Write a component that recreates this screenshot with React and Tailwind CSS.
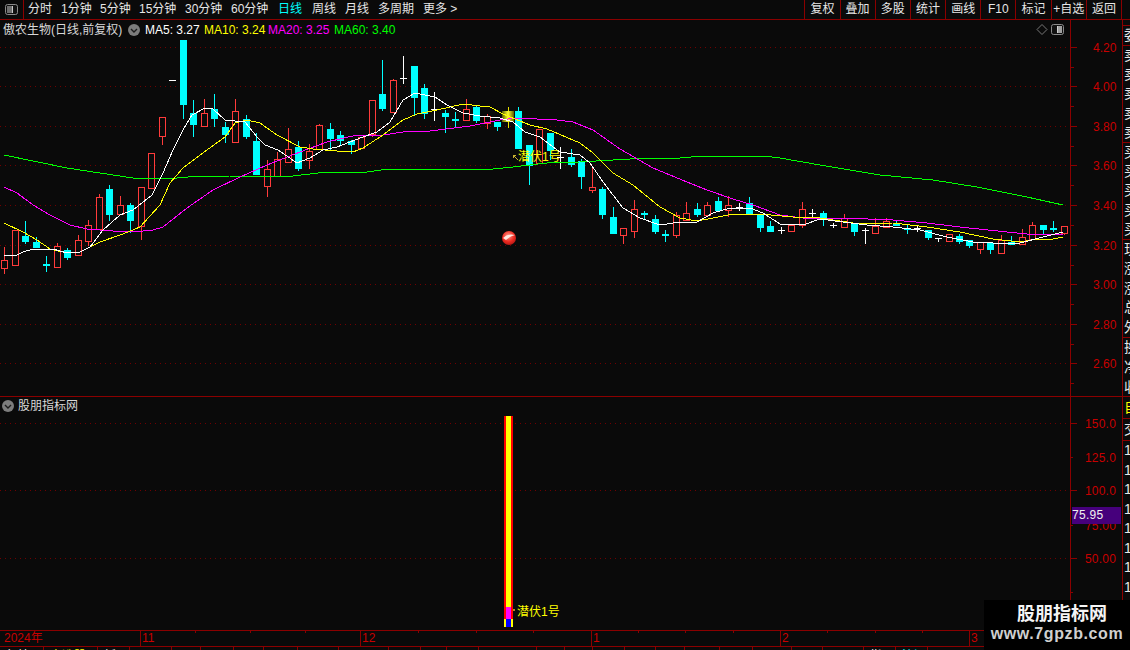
import React from 'react';

const FONT = "font-['Liberation_Sans','Noto_Sans_CJK_SC',sans-serif]";

const TABS = [
  { label: '分时', w: 'w-[33px]' },
  { label: '1分钟', w: 'w-[39px]' },
  { label: '5分钟', w: 'w-[39px]' },
  { label: '15分钟', w: 'w-[46px]' },
  { label: '30分钟', w: 'w-[46px]' },
  { label: '60分钟', w: 'w-[47px]' },
  { label: '日线', w: 'w-[34px]', active: true },
  { label: '周线', w: 'w-[33px]' },
  { label: '月线', w: 'w-[33px]' },
  { label: '多周期', w: 'w-[45px]' },
  { label: '更多 >', w: 'w-[40px]' },
];

const BUTTONS = ['复权', '叠加', '多股', '统计', '画线', 'F10', '标记', '+自选', '返回'];

const MA_LEGEND = [
  { label: 'MA5: 3.27', cls: 'text-white w-[59px]' },
  { label: 'MA10: 3.24', cls: 'text-[#ffff00] w-[64px]' },
  { label: 'MA20: 3.25', cls: 'text-[#ff00ff] w-[66px]' },
  { label: 'MA60: 3.40', cls: 'text-[#00ff00]' },
];

// type, body top, body bottom, wick top, wick bottom (page pixels)
const CANDLES = [
  ['r', 260, 268, 247, 274], ['r', 230, 265, 230, 266], ['c', 236, 242, 221, 244], ['c', 242, 248, 237, 248],
  ['c', 264, 266, 256, 272], ['r', 246, 267, 243, 267], ['c', 250, 258, 248, 260], ['r', 240, 255, 235, 256],
  ['r', 225, 241, 220, 246], ['r', 197, 229, 194, 229], ['c', 189, 215, 185, 221], ['r', 205, 214, 196, 214],
  ['c', 205, 221, 203, 233], ['r', 187, 226, 187, 240], ['r', 153, 188, 153, 189], ['r', 117, 136, 117, 145],
  ['w', 80, 80, 80, 80], ['c', 40, 105, 40, 119], ['c', 113, 125, 100, 137], ['r', 113, 126, 99, 126],
  ['c', 109, 119, 94, 127], ['c', 127, 135, 122, 143], ['r', 111, 142, 99, 142], ['c', 119, 137, 115, 139],
  ['c', 141, 175, 133, 175], ['r', 169, 186, 160, 197], ['r', 159, 176, 152, 176], ['r', 149, 162, 128, 162],
  ['c', 147, 169, 141, 171], ['r', 151, 160, 144, 169], ['r', 125, 149, 124, 149], ['c', 129, 139, 123, 150],
  ['c', 135, 141, 131, 146], ['c', 141, 145, 140, 154], ['r', 137, 148, 137, 148], ['r', 100, 134, 100, 137],
  ['c', 94, 109, 60, 111], ['r', 80, 112, 79, 112], ['w', 78, 78, 56, 84], ['c', 66, 98, 66, 116],
  ['c', 88, 114, 84, 119], ['w', 109, 109, 92, 121], ['c', 113, 117, 110, 133], ['c', 119, 121, 112, 127],
  ['r', 109, 120, 99, 120], ['c', 107, 121, 105, 123], ['r', 116, 123, 114, 129], ['c', 122, 127, 122, 131],
  ['y', 111, 122, 107, 128], ['c', 111, 149, 107, 149], ['c', 145, 166, 145, 185], ['r', 129, 163, 129, 163],
  ['c', 133, 151, 133, 160], ['w', 157, 157, 147, 169], ['c', 157, 165, 149, 167], ['c', 161, 177, 159, 189],
  ['r', 187, 190, 166, 193], ['c', 189, 215, 187, 219], ['c', 217, 234, 207, 234], ['r', 228, 235, 228, 244],
  ['r', 209, 231, 200, 238], ['c', 213, 215, 211, 220], ['c', 219, 232, 215, 234], ['c', 234, 236, 230, 242],
  ['r', 215, 235, 212, 238], ['r', 213, 220, 202, 221], ['c', 209, 215, 203, 217], ['r', 205, 215, 202, 215],
  ['c', 201, 211, 197, 211], ['r', 205, 210, 196, 217], ['w', 207, 207, 203, 211], ['c', 203, 215, 197, 215],
  ['c', 215, 228, 215, 232], ['c', 226, 232, 221, 232], ['w', 230, 230, 227, 234], ['r', 225, 231, 225, 231],
  ['r', 209, 225, 202, 228], ['w', 213, 213, 209, 219], ['c', 213, 220, 211, 226], ['w', 225, 225, 223, 228],
  ['r', 218, 227, 214, 227], ['c', 224, 232, 224, 236], ['w', 230, 230, 228, 244], ['r', 226, 233, 218, 233],
  ['r', 221, 227, 218, 228], ['c', 223, 226, 221, 226], ['c', 228, 230, 225, 234], ['w', 228, 228, 225, 232],
  ['c', 230, 238, 230, 240], ['w', 238, 238, 238, 242], ['r', 234, 241, 234, 241], ['c', 236, 242, 234, 244],
  ['c', 240, 246, 240, 248], ['r', 242, 249, 242, 254], ['c', 243, 250, 243, 254], ['r', 240, 253, 235, 254],
  ['c', 242, 245, 236, 245], ['r', 237, 244, 229, 244], ['r', 225, 239, 222, 239], ['c', 225, 230, 225, 234],
  ['c', 228, 230, 221, 232], ['r', 226, 233, 226, 235],
];

const MA5 = '4,255 17,255 23,252 33,249 53,249 67,253 80,252 90,247 103,230 120,215 133,210 152,195 163,173 173,150 183,130 192,115 205,108 213,109 225,120 245,122 257,137 265,145 278,150 297,163 310,158 323,150 337,147 350,142 363,137 377,132 390,122 403,100 415,93 435,97 447,105 463,113 480,116 500,118 513,122 525,132 540,137 560,152 580,155 590,163 603,182 623,208 640,218 657,224 667,224 680,222 697,222 713,213 730,208 750,208 763,213 780,224 803,225 820,219 843,222 867,225 893,227 920,230 947,237 973,242 993,243 1020,243 1043,237 1063,232';
const MA10 = '4,223 23,232 37,240 50,249 67,253 80,252 100,242 123,234 140,227 160,205 170,183 183,168 200,155 225,137 235,123 247,120 260,123 277,135 300,147 313,149 337,151 353,152 363,148 383,135 403,120 417,114 437,110 463,104 480,106 490,107 503,114 515,119 530,125 547,129 580,143 593,153 613,173 633,185 660,207 680,218 697,221 713,218 728,215 760,214 793,217 820,218 860,224 893,223 927,227 960,232 993,239 1020,242 1037,239 1053,239 1063,237';
const MA20 = '4,187 17,193 33,205 50,215 70,225 87,229 113,231 133,232 153,230 163,227 187,208 213,190 240,177 267,165 300,152 327,142 357,135 383,135 410,131 430,131 470,126 500,120 517,118 557,120 573,122 593,130 620,149 653,168 687,182 707,190 733,199 753,205 780,215 803,218 843,218 893,220 927,223 960,227 1007,232 1027,234 1063,234';
const MA60 = '4,155 33,161 67,168 100,173 133,178 167,179 188,177 230,176 293,176 327,172 367,172 388,169 493,169 513,167 547,163 580,162 613,160 647,158 680,158 703,156 763,156 780,158 820,165 880,175 933,180 977,187 1027,197 1063,205';

const PRICE_LABELS = ['4.20', '4.00', '3.80', '3.60', '3.40', '3.20', '3.00', '2.80', '2.60'];
const priceY = (i) => Math.round(46.5 + i * 39.6);

const INDICATOR_LABELS = [
  { y: 423, t: '150.0' },
  { y: 457, t: '125.0' },
  { y: 490, t: '100.0' },
  { y: 525, t: '75.00' },
  { y: 558, t: '50.00' },
];

const MONTHS = [
  { w: 'w-[141px]', t: '2024年', cls: 'pl-[4px]' },
  { w: 'w-[220px]', t: '11', cls: 'pl-[1px]' },
  { w: 'w-[231px]', t: '12', cls: 'pl-[1px]' },
  { w: 'w-[189px]', t: '1', cls: 'pl-[1px]' },
  { w: 'w-[189px]', t: '2', cls: 'pl-[1px]' },
  { w: 'flex-1', t: '3', cls: 'pl-[1px]' },
];

const TIME_TICKS = [195, 250, 305, 418, 476, 533, 638, 685, 733, 827, 875, 922];

const STRIP_TOP = [
  { t: '委', h: 'h-[20px]', line: true },
  { t: '卖', h: 'h-[19px]' }, { t: '卖', h: 'h-[19px]' }, { t: '卖', h: 'h-[20px]' }, { t: '卖', h: 'h-[19px]' }, { t: '卖', h: 'h-[20px]', line: true },
  { t: '买', h: 'h-[19px]' }, { t: '买', h: 'h-[19px]' }, { t: '买', h: 'h-[20px]' }, { t: '买', h: 'h-[19px]' }, { t: '买', h: 'h-[20px]', line: true },
  { t: '现', h: 'h-[19px]' }, { t: '涨', h: 'h-[20px]' }, { t: '涨', h: 'h-[19px]' }, { t: '总', h: 'h-[20px]' }, { t: '外', h: 'h-[20px]', line: true },
  { t: '换', h: 'h-[20px]' }, { t: '净', h: 'h-[20px]' }, { t: '收', h: 'h-[19px]' },
];

const BOTTOM_TABS = [
  { w: 'w-[44px]', t: '行情', c: 'text-white' }, { w: 'w-[54px]', t: '自选股', c: 'text-[#ffff00]' }, { w: 'w-[32px]', t: '板', c: 'text-white' },
  { w: 'w-[42px]', t: '' }, { w: 'w-[29px]', t: '' }, { w: 'w-[33px]', t: '' }, { w: 'w-[30px]', t: '' }, { w: 'w-[34px]', t: '' }, { w: 'w-[41px]', t: '' },
  { w: 'w-[50px]', t: '' }, { w: 'w-[32px]', t: '' }, { w: 'w-[26px]', t: '' }, { w: 'w-[32px]', t: '' }, { w: 'w-[58px]', t: '' }, { w: 'w-[28px]', t: '' },
  { w: 'w-[28px]', t: '' }, { w: 'w-[32px]', t: '' }, { w: 'w-[31px]', t: '' }, { w: 'w-[29px]', t: '' }, { w: 'w-[35px]', t: '' }, { w: 'w-[33px]', t: '' },
  { w: 'w-[39px]', t: '' }, { w: 'w-[31px]', t: '' }, { w: 'w-[41px]', t: '' }, { w: 'w-[32px]', t: ' 指', c: 'text-white' }, { w: 'w-[32px]', t: '沪深', c: 'text-[#00ffff]' },
];

function Chevron() {
  return (
    <svg width="12" height="12" viewBox="0 0 12 12" className="shrink-0">
      <circle cx="6" cy="6" r="6" fill="#7c7c7c" />
      <path d="M3 5 L6 8 L9 5" fill="none" stroke="#1c1c1c" strokeWidth="1.4" />
    </svg>
  );
}

function Candle({ c, i }) {
  const [type, top, bot, wt, wb] = c;
  const cx = Math.round(4.4 + 10.49 * i);
  const lx = cx + 0.5;
  if (type === 'y') {
    return (
      <g>
        <line x1={lx} x2={lx} y1={wt} y2={wb} stroke="#e8e000" />
        <rect x={cx - 6} y={top} width="12" height={bot - top} fill="url(#hl)" />
      </g>
    );
  }
  if (type === 'w') {
    return (
      <g stroke="#ffffff">
        {wb > wt && <line x1={lx} x2={lx} y1={wt} y2={wb} />}
        <line x1={cx - 3} x2={cx + 4} y1={top + 0.5} y2={top + 0.5} />
      </g>
    );
  }
  if (type === 'c') {
    return (
      <g>
        <line x1={lx} x2={lx} y1={wt} y2={wb} stroke="#00ffff" />
        <rect x={cx - 3} y={top} width="7" height={bot - top} fill="#00ffff" />
      </g>
    );
  }
  return (
    <g stroke="#ff3b3b">
      {wt < top && <line x1={lx} x2={lx} y1={wt} y2={top} />}
      {wb > bot && <line x1={lx} x2={lx} y1={bot} y2={wb} />}
      <rect x={cx - 2.5} y={top + 0.5} width="6" height={bot - top} fill="none" />
    </g>
  );
}

function MainChart() {
  return (
    <svg viewBox="0 20 1070 376" className="absolute inset-0 w-[1070px] h-[376px]" shapeRendering="crispEdges">
      <defs>
        <linearGradient id="hl" x1="0" x2="1" y1="0" y2="0">
          <stop offset="0" stopColor="#5a5a00" />
          <stop offset="0.5" stopColor="#ffff30" />
          <stop offset="1" stopColor="#5a5a00" />
        </linearGradient>
        <radialGradient id="ball" cx="0.45" cy="0.35" r="0.75">
          <stop offset="0" stopColor="#ff9a8a" />
          <stop offset="0.55" stopColor="#ee2a20" />
          <stop offset="1" stopColor="#a01010" />
        </radialGradient>
      </defs>
      {PRICE_LABELS.map((p, i) => (
        <line key={p} x1="0" x2="1070" y1={priceY(i) + 0.5} y2={priceY(i) + 0.5} stroke="#700000" strokeDasharray="1 4" />
      ))}
      {CANDLES.map((c, i) => (
        <Candle key={i} c={c} i={i} />
      ))}
      <polyline points={MA60} fill="none" stroke="#00ff00" />
      <polyline points={MA20} fill="none" stroke="#ff00ff" />
      <polyline points={MA10} fill="none" stroke="#ffff00" />
      <polyline points={MA5} fill="none" stroke="#ffffff" />
      <path d="M518 160 L513 155 M513 155 L513 158 M513 155 L516 155" stroke="#c8b030" fill="none" />
      <g shapeRendering="auto">
        <circle cx="509" cy="238" r="7" fill="url(#ball)" />
        <path d="M503 238 Q508 233 515 235 Q510 236 506 240 Z" fill="#ffe8e0" />
      </g>
    </svg>
  );
}

function PriceAxis() {
  return (
    <svg viewBox="1071 20 51 376" className="absolute inset-0 w-[51px] h-[376px]" shapeRendering="crispEdges">
      {PRICE_LABELS.map((p, i) => (
        <g key={p}>
          <line x1="1071" x2="1077" y1={priceY(i) + 0.5} y2={priceY(i) + 0.5} stroke="#8b0000" />
          <line x1="1071" x2="1074" y1={priceY(i) + 20.5} y2={priceY(i) + 20.5} stroke="#8b0000" />
          <text x="1093" y={priceY(i) + 5} fill="#c80000" fontSize="12" fontFamily="'Liberation Sans', sans-serif" shapeRendering="auto">
            {p}
          </text>
        </g>
      ))}
    </svg>
  );
}

function IndicatorAxis() {
  return (
    <svg viewBox="1071 397 51 233" className="absolute inset-0 w-[51px] h-[233px]" shapeRendering="crispEdges">
      {INDICATOR_LABELS.map((l, i) => (
        <g key={l.t}>
          <line x1="1071" x2={i % 2 ? 1073 : 1077} y1={l.y + 0.5} y2={l.y + 0.5} stroke="#8b0000" />
          <text x="1085" y={l.y + 5} fill="#c80000" fontSize="12" letterSpacing="0.2" fontFamily="'Liberation Sans', sans-serif" shapeRendering="auto">
            {l.t}
          </text>
        </g>
      ))}
      <line x1="1071" x2="1073" y1="592.5" y2="592.5" stroke="#8b0000" />
    </svg>
  );
}

function StripCell({ t, h, line, color = 'text-[#e8e8e8]' }) {
  return (
    <div className={`${h} overflow-hidden pl-[1px] text-[14px] leading-[19px] whitespace-nowrap ${color} ${line ? 'border-b border-[#8b0000]' : ''}`}>
      {t}
    </div>
  );
}

export default function App() {
  return (
    <div className={`relative w-[1130px] h-[650px] overflow-hidden bg-[#0a0a0a] flex flex-col text-[12px] ${FONT}`}>
      {/* Top toolbar */}
      <div className="h-[20px] shrink-0 flex border-b border-[#8b0000] text-[#e6e6e6]">
        <div className="w-[24px] shrink-0 flex items-center justify-center border-r border-[#8b0000]">
          <svg width="13" height="11" viewBox="0 0 13 11">
            <rect x="0.5" y="0.5" width="12" height="10" rx="2" fill="#111" stroke="#8a8a8a" />
            <rect x="2" y="2" width="5" height="7" fill="#707070" />
            <rect x="7" y="2" width="1" height="7" fill="#c8c8c8" />
          </svg>
        </div>
        <div className="flex pl-[4px] leading-[19px]">
          {TABS.map((t) => (
            <span key={t.label} className={`${t.w} shrink-0 whitespace-nowrap ${t.active ? 'text-[#00ffff]' : ''}`}>
              {t.label}
            </span>
          ))}
        </div>
        <div className="ml-auto flex mr-[8px]">
          {BUTTONS.map((b) => (
            <div key={b} className="w-[35.2px] shrink-0 border-l border-[#8b0000] text-center leading-[19px] whitespace-nowrap overflow-hidden">
              {b}
            </div>
          ))}
          <div className="w-0 border-l border-[#8b0000]" />
        </div>
      </div>

      {/* K-line pane */}
      <div className="h-[377px] shrink-0 flex border-b border-[#8b0000]">
        <div className="relative w-[1070px] shrink-0 overflow-hidden">
          <MainChart />
          <div className="absolute left-[3px] top-[1px] flex items-center h-[18px] whitespace-nowrap">
            <span className="w-[125px] text-[#d8d8d8]">傲农生物(日线,前复权)</span>
            <Chevron />
            <div className="flex pl-[5px]">
              {MA_LEGEND.map((m) => (
                <span key={m.label} className={m.cls}>{m.label}</span>
              ))}
            </div>
          </div>
          <div className="absolute left-[1036px] top-[4px] flex items-center gap-[2px]">
            <svg width="13" height="11" viewBox="0 0 13 11">
              <path d="M6 0.5 L11 5.5 L6 10.5 L1 5.5 Z" fill="none" stroke="#777" />
            </svg>
            <svg width="13" height="11" viewBox="0 0 13 11">
              <rect x="0.5" y="0.5" width="12" height="10" rx="2" fill="#111" stroke="#8a8a8a" />
              <rect x="7" y="2" width="4" height="7" fill="#a0a0a0" />
              <rect x="6" y="2" width="1" height="7" fill="#d0d0d0" />
            </svg>
          </div>
          <span className="absolute left-[518px] top-[129px] text-[#ffff00] whitespace-nowrap leading-[16px]">潜伏1号</span>
        </div>
        <div className="relative w-[52px] shrink-0 border-l border-[#8b0000]">
          <PriceAxis />
        </div>
        <div className="flex-1 border-l border-[#8b0000] overflow-hidden pt-[5px]">
          <div className="border-t border-[#8b0000]" />
          {STRIP_TOP.map((s, i) => (
            <StripCell key={i} {...s} />
          ))}
        </div>
      </div>

      {/* Indicator pane */}
      <div className="h-[233px] shrink-0 flex">
        <div className="relative w-[1070px] shrink-0 overflow-hidden">
          <div className="flex items-center gap-[4px] pl-[2px] h-[18px] text-[#d8d8d8] whitespace-nowrap">
            <Chevron />
            <span>股朋指标网</span>
          </div>
          <svg viewBox="0 397 1070 233" className="absolute inset-0 w-[1070px] h-[233px]" shapeRendering="crispEdges">
            {[423, 490, 558].map((y) => (
              <line key={y} x1="0" x2="1070" y1={y + 0.5} y2={y + 0.5} stroke="#700000" strokeDasharray="1 4" />
            ))}
            <rect x="504" y="416" width="9" height="211" fill="#ff0000" />
            <rect x="506" y="416" width="5" height="191" fill="#ffff00" />
            <rect x="506" y="607" width="5" height="12" fill="#ff00ff" />
            <rect x="504" y="619" width="2" height="8" fill="#ffff00" />
            <rect x="506" y="619" width="5" height="8" fill="#0000ff" />
            <rect x="511" y="619" width="2" height="8" fill="#ffff00" />
            <rect x="513" y="609" width="2" height="2" fill="#b09020" />
          </svg>
          <span className="absolute left-[517px] top-[207px] text-[#ffff00] whitespace-nowrap leading-[16px]">潜伏1号</span>
        </div>
        <div className="relative w-[52px] shrink-0 border-l border-[#8b0000]">
          <IndicatorAxis />
          <div className="absolute left-[1px] right-[1px] top-[110px] h-[17px] bg-[#46007c] text-[#f0f0f0] leading-[17px] tracking-[0.3px]">
            75.95
          </div>
        </div>
        <div className="flex-1 border-l border-[#8b0000] overflow-hidden">
          <div className="h-[22px] overflow-hidden pl-[1px] text-[14px] leading-[21px] text-[#ffff00] border-b border-[#8b0000] whitespace-nowrap">自</div>
          <div className="h-[22px] overflow-hidden pl-[1px] text-[14px] leading-[21px] text-[#e8e8e8] border-b border-[#8b0000] whitespace-nowrap">交</div>
          {Array.from({ length: 9 }).map((_, i) => (
            <div key={i} className="h-[19.5px] overflow-hidden pl-[1px] text-[14px] leading-[19px] text-[#e8e8e8]">14</div>
          ))}
        </div>
      </div>

      {/* Time axis */}
      <div className="relative h-[17px] shrink-0 flex border-y border-[#8b0000] text-[#c80000] leading-[15px]">
        {MONTHS.map((m) => (
          <div key={m.t} className={`${m.w} shrink-0 ${m.cls} ${m.t === '3' ? '' : 'border-r border-[#8b0000]'}`}>
            {m.t}
          </div>
        ))}
        <svg viewBox="0 0 1130 2" className="absolute left-0 top-0 w-[1130px] h-[2px]" shapeRendering="crispEdges">
          {TIME_TICKS.map((x) => (
            <line key={x} x1={x + 0.5} x2={x + 0.5} y1="0" y2="2" stroke="#8b0000" />
          ))}
        </svg>
      </div>

      {/* Bottom tab strip, cut off by the window */}
      <div className="flex-1 flex overflow-hidden">
        {BOTTOM_TABS.map((b, i) => (
          <div key={i} className={`${b.w} shrink-0 border-r border-[#8b0000] pl-[6px] pt-[2px] leading-[14px] whitespace-nowrap overflow-hidden ${b.c || ''}`}>
            {b.t}
          </div>
        ))}
      </div>

      {/* Watermark */}
      <div className="absolute right-0 bottom-0 w-[146px] h-[50px] bg-black flex flex-col items-center pt-[2px] font-bold text-[#f4f4f4]">
        <span className="pl-[10px] text-[18px] leading-[24px]">股朋指标网</span>
        <span className="-mt-[1px] text-[16px] leading-[18px] tracking-[0.6px] text-[#d0d0d0] font-['Liberation_Sans',sans-serif]">www.7gpzb.com</span>
      </div>
    </div>
  );
}
